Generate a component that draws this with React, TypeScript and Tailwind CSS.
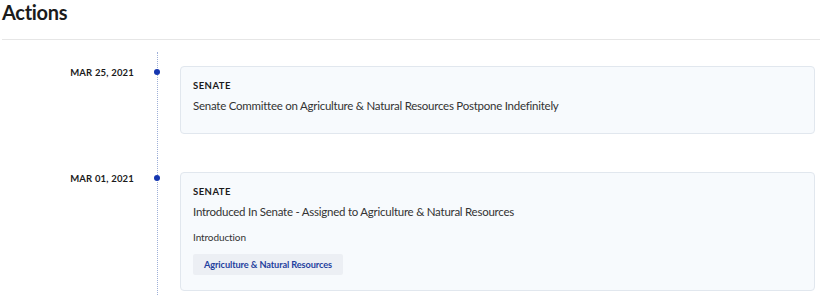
import React from 'react';

type Action = {
  date: string;
  chamber: string;
  text: string;
  type?: string;
  committee?: string;
};

const ACTIONS: Action[] = [
  {
    date: 'MAR 25, 2021',
    chamber: 'SENATE',
    text: 'Senate Committee on Agriculture & Natural Resources Postpone Indefinitely',
  },
  {
    date: 'MAR 01, 2021',
    chamber: 'SENATE',
    text: 'Introduced In Senate - Assigned to Agriculture & Natural Resources',
    type: 'Introduction',
    committee: 'Agriculture & Natural Resources',
  },
];

export default function App() {
  return (
    <div className="w-[820px] h-[296px] overflow-hidden bg-white font-['Lato','Liberation_Sans',sans-serif] text-[#222]">
      <h2 className="pl-[2px] pt-[2px] text-[20px] leading-[20px] font-bold tracking-[-0.3px] text-[#1b1b1b]">Actions</h2>
      <div className="mt-[17px] ml-[2px] border-t border-[#e6e6e6]" />

      <div className="mt-[12px]">
        {ACTIONS.map((a, i) => (
          <div key={i} className="flex">
            {/* Date */}
            <div className="w-[134px] shrink-0 pt-[15px] text-right text-[9.5px] leading-[12px] font-bold tracking-[0.02em] text-[#1b1b1b]">
              {a.date}
            </div>

            {/* Timeline */}
            <div className="w-[46px] shrink-0 flex justify-center">
              <div className="relative w-0 border-l border-dotted border-[#9fb0d8]">
                <span className="absolute left-[-3.5px] top-[17px] w-[6px] h-[6px] rounded-full bg-[#1536b0]" />
              </div>
            </div>

            {/* Card */}
            <div className="flex-1 pt-[14px] pb-[24px] pr-[5px]">
              <div
                className={
                  'bg-[#f7fafd] border border-[#e1e7ee] rounded-[4px] px-[12px] pt-[12px] ' +
                  (a.committee ? 'pb-[15px]' : 'pb-[18px]')
                }
              >
                <div className="text-[9.5px] leading-[14px] font-bold tracking-[0.05em] text-[#1b1b1b]">{a.chamber}</div>
                <div className="mt-[4px] text-[11.5px] leading-[18px] tracking-[-0.25px] text-[#333]">{a.text}</div>
                {a.type && (
                  <div className="mt-[8px] text-[10px] leading-[16px] tracking-[-0.1px] text-[#333]">{a.type}</div>
                )}
                {a.committee && (
                  <div className="mt-[5px]">
                    <span className="inline-block bg-[#eceff4] rounded-[2px] px-[11px] py-[4px] text-[9.2px] leading-[13px] font-bold tracking-[-0.1px] text-[#1f3f9e]">
                      {a.committee}
                    </span>
                  </div>
                )}
              </div>
            </div>
          </div>
        ))}
      </div>
    </div>
  );
}
